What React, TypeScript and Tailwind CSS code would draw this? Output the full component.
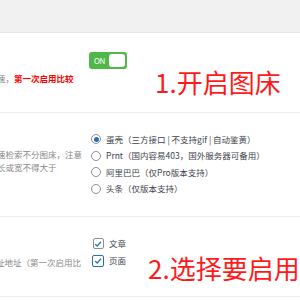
import React from 'react'

const font = { fontFamily: '"Microsoft YaHei", "Noto Sans CJK SC", "Liberation Sans", sans-serif' }

function Toggle() {
  return (
    <div className="flex items-center justify-between w-[38px] h-[17px] rounded-[3px] bg-[#4fb848] pl-[5px] pr-[2px]">
      <span className="text-[8px] leading-none text-white tracking-[-0.5px]">ON</span>
      <span className="w-[16px] h-[13px] rounded-[3px] bg-white" />
    </div>
  )
}

function Radio({ checked, label }: { checked?: boolean; label: string }) {
  return (
    <div className="flex items-center h-[16.5px] gap-[5px]">
      <span className="w-[10px] h-[10px] rounded-full border border-[#8c8f94] flex items-center justify-center bg-white">
        {checked && <span className="w-[5px] h-[5px] rounded-full bg-[#2271b1]" />}
      </span>
      <span className="text-[8.5px] text-[#3c434a] whitespace-nowrap">{label}</span>
    </div>
  )
}

function Check({ focused, label }: { focused?: boolean; label: string }) {
  return (
    <div className="flex items-center h-[17px] gap-[5px]">
      <span
        className={
          focused
            ? 'w-[12px] h-[12px] rounded-[2px] border-[1.5px] border-[#2271b1] flex items-center justify-center bg-white'
            : 'w-[11px] h-[11px] ml-[0.5px] mr-[0.5px] rounded-[2px] border border-[#8c8f94] flex items-center justify-center bg-white'
        }
      >
        <svg viewBox="0 0 10 10" className="w-[8px] h-[8px]">
          <path d="M1.5 5.2 L4 7.6 L8.6 2.2" fill="none" stroke="#2271b1" strokeWidth="1.6" />
        </svg>
      </span>
      <span className="text-[8.5px] text-[#3c434a]">{label}</span>
    </div>
  )
}

export default function App() {
  return (
    <div className="relative w-[300px] h-[300px] overflow-hidden bg-white" style={font}>
      <div className="h-[33px] bg-[#f1f1f1] border-b border-[#e8e8e8]" />

      <div className="flex h-[80px] border-b border-[#eeeeee]">
        <div className="w-[97px] pt-[39px] -ml-[3px] text-[8.5px] leading-[12px] text-[#888] whitespace-nowrap">
          速，<span className="text-[#ff0000] font-bold">第一次启用比较</span>
        </div>
        <div className="pt-[19px] -ml-[5px]">
          <Toggle />
        </div>
      </div>

      <div className="flex h-[104px] border-b border-[#eeeeee]">
        <div className="w-[97px] pt-[35px] -ml-[3px] text-[8.5px] leading-[13px] text-[#888] whitespace-nowrap overflow-hidden">
          <div>速检索不分图床，注意</div>
          <div>长或宽不得大于</div>
        </div>
        <div className="pt-[18px] -ml-[3px]">
          <Radio checked label="蛋壳（三方接口 | 不支持gif | 自动鉴黄）" />
          <Radio label="Prnt（国内容易403，国外服务器可备用）" />
          <Radio label="阿里巴巴（仅Pro版本支持）" />
          <Radio label="头条（仅版本支持）" />
        </div>
      </div>

      <div className="flex h-[80px] border-b border-[#eeeeee]">
        <div className="w-[97px] pt-[39px] -ml-[4px] text-[8.5px] leading-[12px] text-[#888] whitespace-nowrap overflow-hidden">
          址地址（第一次启用比
        </div>
        <div className="pt-[18px] -ml-[1px]">
          <Check label="文章" />
          <Check focused label="页面" />
        </div>
      </div>

      <div className="absolute left-[155px] top-[69px] text-[26px] leading-none text-[#ff1a1a] whitespace-nowrap">
        1.开启图床
      </div>
      <div className="absolute left-[148px] top-[255px] text-[26px] leading-none text-[#ff1a1a] whitespace-nowrap">
        2.选择要启用
      </div>
    </div>
  )
}
